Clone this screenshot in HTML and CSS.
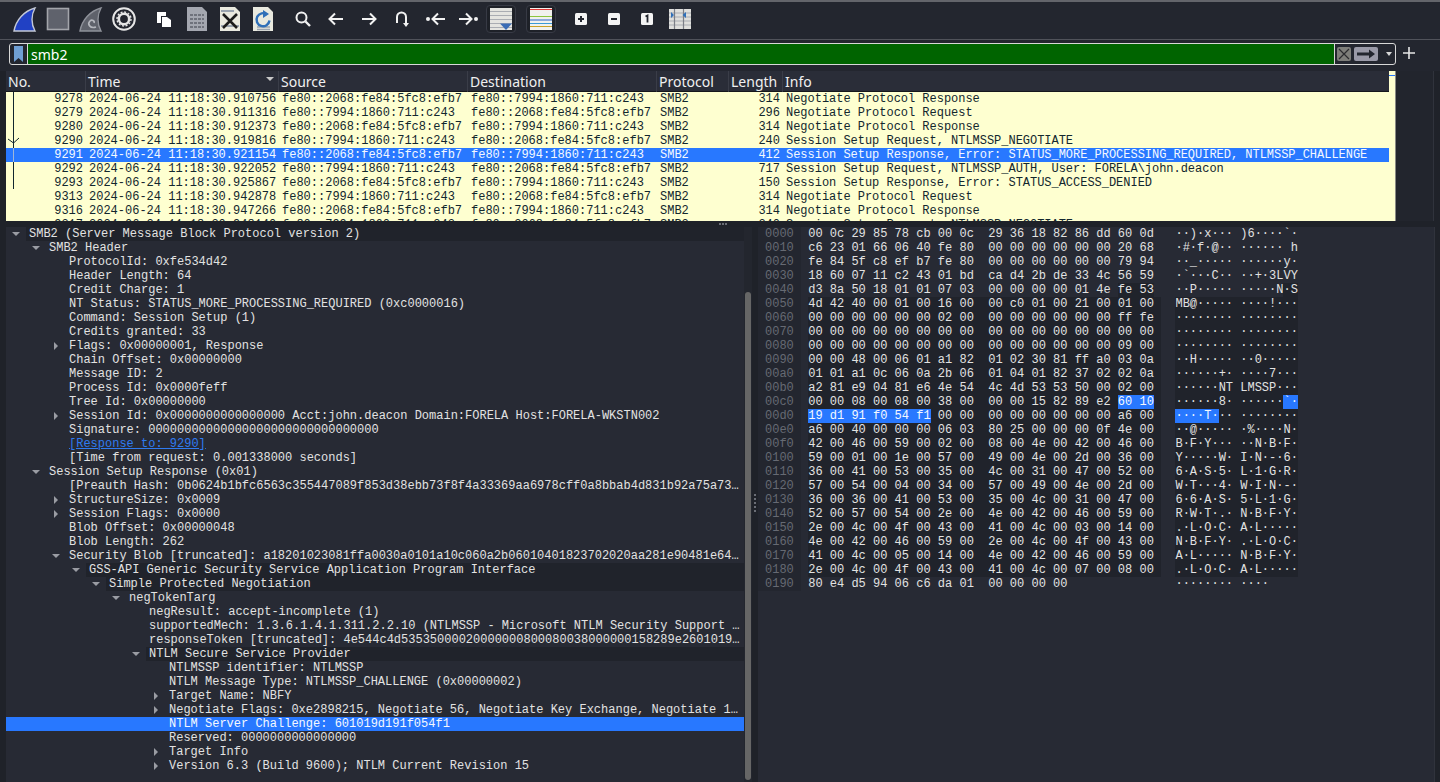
FILE: index.html
```html
<!DOCTYPE html>
<html lang="en">
<head>
    <meta charset="UTF-8">
    <meta name="viewport" content="width=device-width, initial-scale=1.0">
    <title>Wireshark</title>
    <link rel="stylesheet" href="styles.css">
</head>
<body>

    <!-- Main toolbar -->
    <div class="toolbar">
        <span class="tool"><svg width="28" height="28" viewBox="0 0 28 28"><path d="M3 26C5 15 13 6 24 3C20 10 20 19 24 26Z" fill="#2141c4" stroke="#c4c9d6" stroke-width="1.4"/></svg></span>
        <span class="tool"><svg width="28" height="28" viewBox="0 0 28 28"><rect x="3.5" y="3.5" width="21" height="21" fill="#5f626c" stroke="#a3a5ab" stroke-width="1.6"/></svg></span>
        <span class="tool"><svg width="28" height="28" viewBox="0 0 28 28"><path d="M3 26C5 15 13 6 24 3C20 10 20 19 24 26Z" fill="#5f626b" stroke="#8f929a" stroke-width="1.4"/><path d="M19 22C13 24 10 19 13 16C15 14 18 16 17 18" fill="none" stroke="#b5b7bd" stroke-width="1.6"/></svg></span>
        <span class="tool"><svg width="28" height="28" viewBox="0 0 28 28"><circle cx="14" cy="14" r="10.8" fill="none" stroke="#e6e6e6" stroke-width="2"/><circle cx="14" cy="14" r="5.2" fill="none" stroke="#e6e6e6" stroke-width="2.6"/><circle cx="14" cy="14" r="7" fill="none" stroke="#e6e6e6" stroke-width="1.4" stroke-dasharray="2 1.66"/></svg></span>
        <span class="sep"></span>
        <span class="tool"><svg width="28" height="28" viewBox="0 0 28 28"><path d="M7 7H16V11H11V18H7Z" fill="#fff"/><path d="M12 12H17L21 15V22H12Z" fill="#fff"/></svg></span>
        <span class="tool"><svg width="28" height="28" viewBox="0 0 28 28"><path d="M4 2H19L24 7V26H4Z" fill="#a4a7b0"/><path d="M7 10H21M7 14H21M7 18H21M7 22H21" stroke="#6f727c" stroke-width="2" stroke-dasharray="3 1"/></svg></span>
        <span class="tool"><svg width="28" height="28" viewBox="0 0 28 28"><path d="M4 2H19L24 7V26H4Z" fill="#e9e9df"/><path d="M5 6H18M5 21H23" stroke="#9aa4b0" stroke-width="2"/><path d="M7 9L21 23M21 9L7 23" stroke="#1b1b1b" stroke-width="2.6"/></svg></span>
        <span class="tool"><svg width="28" height="28" viewBox="0 0 28 28"><path d="M4 2H19L24 7V26H4Z" fill="#e9e9df"/><path d="M8 22H21M8 24.5H21" stroke="#9aa4b0" stroke-width="1.4"/><path d="M18 9.5A6.5 6.5 0 1 0 20.5 15.5" fill="none" stroke="#2f6fb8" stroke-width="2.4"/><path d="M14 5L20 9L14 13Z" fill="#2f6fb8"/></svg></span>
        <span class="sep"></span>
        <span class="tool"><svg width="28" height="28" viewBox="0 0 28 28"><circle cx="12.5" cy="12.5" r="5" fill="none" stroke="#f2f2f2" stroke-width="2"/><path d="M16.5 16.5L21 21" stroke="#f2f2f2" stroke-width="2.4"/></svg></span>
        <span class="tool"><svg width="28" height="28" viewBox="0 0 28 28"><path d="M21 14H8M13 8.5L7.5 14L13 19.5" fill="none" stroke="#f2f2f2" stroke-width="2"/></svg></span>
        <span class="tool"><svg width="28" height="28" viewBox="0 0 28 28"><path d="M7 14H20M15 8.5L20.5 14L15 19.5" fill="none" stroke="#f2f2f2" stroke-width="2"/></svg></span>
        <span class="tool"><svg width="28" height="28" viewBox="0 0 28 28"><path d="M9 18V12A4.5 4.5 0 0 1 18 12V20" fill="none" stroke="#f2f2f2" stroke-width="2"/><path d="M15 18L18 22L21 18Z" fill="#f2f2f2"/></svg></span>
        <span class="tool"><svg width="28" height="28" viewBox="0 0 28 28"><circle cx="7" cy="14" r="2" fill="#f2f2f2"/><path d="M24 14H12M17 8.5L11.5 14L17 19.5" fill="none" stroke="#f2f2f2" stroke-width="2"/></svg></span>
        <span class="tool"><svg width="28" height="28" viewBox="0 0 28 28"><circle cx="22" cy="14" r="2" fill="#f2f2f2"/><path d="M5 14H17M12 8.5L17.5 14L12 19.5" fill="none" stroke="#f2f2f2" stroke-width="2"/></svg></span>
        <span class="tool boxed"><svg width="22" height="22" viewBox="0 0 22 22"><rect width="22" height="22" fill="#e4e4e0"/><path d="M0 3.5H22M0 7.5H22M0 11.5H22M0 15.5H22M0 19.5H22" stroke="#a9acb2" stroke-width="1"/><path d="M10 15.5H22L16 22Z" fill="#3a6db5"/></svg></span>
        <span class="sep"></span>
        <span class="tool boxed"><svg width="22" height="22" viewBox="0 0 22 22"><rect width="22" height="22" fill="#f1f1ee"/><path d="M0 1.5H22" stroke="#d33" stroke-width="1"/><path d="M0 8.5H22" stroke="#8cc63f" stroke-width="1"/><path d="M0 12H22" stroke="#2a62c8" stroke-width="1"/><path d="M0 15.5H22" stroke="#3b9ad6" stroke-width="1"/><path d="M0 18.5H22" stroke="#c9a227" stroke-width="1"/></svg></span>
        <span class="sep"></span>
        <span class="tool"><svg width="28" height="28" viewBox="0 0 28 28"><rect x="8" y="8" width="12" height="12" rx="1.5" fill="#f4f4f4"/><path d="M11 14H17M14 11V17" stroke="#23262f" stroke-width="2"/></svg></span>
        <span class="tool"><svg width="28" height="28" viewBox="0 0 28 28"><rect x="8" y="8" width="12" height="12" rx="1.5" fill="#f4f4f4"/><path d="M11 14H17" stroke="#23262f" stroke-width="2"/></svg></span>
        <span class="tool"><svg width="28" height="28" viewBox="0 0 28 28"><rect x="8" y="8" width="12" height="12" rx="1.5" fill="#f4f4f4"/><path d="M12.5 11.5L14.5 10.5V17.5" fill="none" stroke="#23262f" stroke-width="1.8"/></svg></span>
        <span class="tool"><svg width="24" height="24" viewBox="0 0 24 24"><rect x="1" y="2" width="22" height="20" fill="#dfdfdc"/><path d="M1 6H23M1 10H23M1 14H23M1 18H23" stroke="#a9acb2"/><path d="M6.5 2V22M15.5 2V22" stroke="#7b7e86" stroke-width="1.2"/><path d="M3 5L6 8L3 11ZM18 5L14.5 8L18 11Z" fill="#2f6fb8"/></svg></span>
    </div>

    <!-- Display filter -->
    <div class="filter-row">
        <div class="filter">
            <span class="bookmark"><svg width="11" height="16" viewBox="0 0 11 16"><path d="M1 0H10V16L5.5 12L1 16Z" fill="#6f9fd4"/></svg></span>
            <span class="filter-input">smb2</span>
            <span class="filter-btns">
                <span class="clear-btn"><svg width="12" height="12" viewBox="0 0 12 12"><path d="M1 1L11 11M11 1L1 11" stroke="#2b2b2f" stroke-width="1.2"/></svg></span>
                <span class="apply-btn"><svg width="20" height="10" viewBox="0 0 20 10"><path d="M1 3.5H13V0.5L19 5L13 9.5V6.5H1Z" fill="#23262f"/></svg></span>
                <span class="drop"></span>
            </span>
        </div>
        <svg class="plus" width="14" height="14" viewBox="0 0 14 14"><path d="M7 1V13M1 7H13" stroke="#e6e6e6" stroke-width="1.6"/></svg>
    </div>

    <!-- Packet list -->
    <div class="list-row">
        <div class="packets">
            <div class="cols head">
                <span>No.</span>
                <span class="sorted">Time</span>
                <span>Source</span>
                <span>Destination</span>
                <span>Protocol</span>
                <span>Length</span>
                <span>Info</span>
            </div>
            <div class="rows">
                <svg class="conv" width="20" height="98" viewBox="0 0 20 98"><path d="M7.5 0V97" stroke="#12272e"/><path d="M2 47L7.5 51L13 46" fill="none" stroke="#12272e"/><path d="M7.5 56V70" stroke="#9fb6d8"/></svg>
                <div class="cols pkt"><span>9278</span><span>2024-06-24 11:18:30.910756</span><span>fe80::2068:fe84:5fc8:efb7</span><span>fe80::7994:1860:711:c243</span><span>SMB2</span><span>314</span><span>Negotiate Protocol Response</span></div>
                <div class="cols pkt"><span>9279</span><span>2024-06-24 11:18:30.911316</span><span>fe80::7994:1860:711:c243</span><span>fe80::2068:fe84:5fc8:efb7</span><span>SMB2</span><span>296</span><span>Negotiate Protocol Request</span></div>
                <div class="cols pkt"><span>9280</span><span>2024-06-24 11:18:30.912373</span><span>fe80::2068:fe84:5fc8:efb7</span><span>fe80::7994:1860:711:c243</span><span>SMB2</span><span>314</span><span>Negotiate Protocol Response</span></div>
                <div class="cols pkt"><span>9290</span><span>2024-06-24 11:18:30.919816</span><span>fe80::7994:1860:711:c243</span><span>fe80::2068:fe84:5fc8:efb7</span><span>SMB2</span><span>240</span><span>Session Setup Request, NTLMSSP_NEGOTIATE</span></div>
                <div class="cols pkt current"><span>9291</span><span>2024-06-24 11:18:30.921154</span><span>fe80::2068:fe84:5fc8:efb7</span><span>fe80::7994:1860:711:c243</span><span>SMB2</span><span>412</span><span>Session Setup Response, Error: STATUS_MORE_PROCESSING_REQUIRED, NTLMSSP_CHALLENGE</span></div>
                <div class="cols pkt"><span>9292</span><span>2024-06-24 11:18:30.922052</span><span>fe80::7994:1860:711:c243</span><span>fe80::2068:fe84:5fc8:efb7</span><span>SMB2</span><span>717</span><span>Session Setup Request, NTLMSSP_AUTH, User: FORELA\john.deacon</span></div>
                <div class="cols pkt"><span>9293</span><span>2024-06-24 11:18:30.925867</span><span>fe80::2068:fe84:5fc8:efb7</span><span>fe80::7994:1860:711:c243</span><span>SMB2</span><span>150</span><span>Session Setup Response, Error: STATUS_ACCESS_DENIED</span></div>
                <div class="cols pkt"><span>9313</span><span>2024-06-24 11:18:30.942878</span><span>fe80::7994:1860:711:c243</span><span>fe80::2068:fe84:5fc8:efb7</span><span>SMB2</span><span>314</span><span>Negotiate Protocol Request</span></div>
                <div class="cols pkt"><span>9316</span><span>2024-06-24 11:18:30.947266</span><span>fe80::2068:fe84:5fc8:efb7</span><span>fe80::7994:1860:711:c243</span><span>SMB2</span><span>314</span><span>Negotiate Protocol Response</span></div>
                <div class="cols pkt"><span>9317</span><span>2024-06-24 11:18:30.948140</span><span>fe80::7994:1860:711:c243</span><span>fe80::2068:fe84:5fc8:efb7</span><span>SMB2</span><span>240</span><span>Session Setup Request, NTLMSSP_NEGOTIATE</span></div>
            </div>
        </div>
        <div class="packet-map"><span class="map-mark"></span></div>
        <div class="list-side"></div>
    </div>

    <div class="h-split"><span class="grip-h"></span></div>

    <div class="bottom">
        <!-- Packet details -->
        <div class="details">
            <div class="tree">
                <div class="node l0"><i class="tw open"></i><span class="txt dark">SMB2 (Server Message Block Protocol version 2)</span></div>
                <div class="node l1"><i class="tw open"></i><span class="txt">SMB2 Header</span></div>
                <div class="node l2"><i class="tw"></i><span class="txt">ProtocolId: 0xfe534d42</span></div>
                <div class="node l2"><i class="tw"></i><span class="txt">Header Length: 64</span></div>
                <div class="node l2"><i class="tw"></i><span class="txt">Credit Charge: 1</span></div>
                <div class="node l2"><i class="tw"></i><span class="txt">NT Status: STATUS_MORE_PROCESSING_REQUIRED (0xc0000016)</span></div>
                <div class="node l2"><i class="tw"></i><span class="txt">Command: Session Setup (1)</span></div>
                <div class="node l2"><i class="tw"></i><span class="txt">Credits granted: 33</span></div>
                <div class="node l2"><i class="tw closed"></i><span class="txt">Flags: 0x00000001, Response</span></div>
                <div class="node l2"><i class="tw"></i><span class="txt">Chain Offset: 0x00000000</span></div>
                <div class="node l2"><i class="tw"></i><span class="txt">Message ID: 2</span></div>
                <div class="node l2"><i class="tw"></i><span class="txt">Process Id: 0x0000feff</span></div>
                <div class="node l2"><i class="tw"></i><span class="txt">Tree Id: 0x00000000</span></div>
                <div class="node l2"><i class="tw closed"></i><span class="txt">Session Id: 0x0000000000000000 Acct:john.deacon Domain:FORELA Host:FORELA-WKSTN002</span></div>
                <div class="node l2"><i class="tw"></i><span class="txt">Signature: 00000000000000000000000000000000</span></div>
                <div class="node l2"><i class="tw"></i><span class="txt"><a class="frame-link">[Response to: 9290]</a></span></div>
                <div class="node l2"><i class="tw"></i><span class="txt">[Time from request: 0.001338000 seconds]</span></div>
                <div class="node l1"><i class="tw open"></i><span class="txt">Session Setup Response (0x01)</span></div>
                <div class="node l2"><i class="tw"></i><span class="txt">[Preauth Hash: 0b0624b1bfc6563c355447089f853d38ebb73f8f4a33369aa6978cff0a8bbab4d831b92a75a73…</span></div>
                <div class="node l2"><i class="tw closed"></i><span class="txt">StructureSize: 0x0009</span></div>
                <div class="node l2"><i class="tw closed"></i><span class="txt">Session Flags: 0x0000</span></div>
                <div class="node l2"><i class="tw"></i><span class="txt">Blob Offset: 0x00000048</span></div>
                <div class="node l2"><i class="tw"></i><span class="txt">Blob Length: 262</span></div>
                <div class="node l2"><i class="tw open"></i><span class="txt">Security Blob [truncated]: a18201023081ffa0030a0101a10c060a2b06010401823702020aa281e90481e64…</span></div>
                <div class="node l3"><i class="tw open"></i><span class="txt dark">GSS-API Generic Security Service Application Program Interface</span></div>
                <div class="node l4"><i class="tw open"></i><span class="txt dark">Simple Protected Negotiation</span></div>
                <div class="node l5"><i class="tw open"></i><span class="txt">negTokenTarg</span></div>
                <div class="node l6"><i class="tw"></i><span class="txt">negResult: accept-incomplete (1)</span></div>
                <div class="node l6"><i class="tw"></i><span class="txt">supportedMech: 1.3.6.1.4.1.311.2.2.10 (NTLMSSP - Microsoft NTLM Security Support …</span></div>
                <div class="node l6"><i class="tw"></i><span class="txt">responseToken [truncated]: 4e544c4d53535000020000000800080038000000158289e2601019…</span></div>
                <div class="node l6"><i class="tw open"></i><span class="txt dark">NTLM Secure Service Provider</span></div>
                <div class="node l7"><i class="tw"></i><span class="txt">NTLMSSP identifier: NTLMSSP</span></div>
                <div class="node l7"><i class="tw"></i><span class="txt">NTLM Message Type: NTLMSSP_CHALLENGE (0x00000002)</span></div>
                <div class="node l7"><i class="tw closed"></i><span class="txt">Target Name: NBFY</span></div>
                <div class="node l7"><i class="tw closed"></i><span class="txt">Negotiate Flags: 0xe2898215, Negotiate 56, Negotiate Key Exchange, Negotiate 1…</span></div>
                <div class="node l7 picked"><i class="tw"></i><span class="txt">NTLM Server Challenge: 601019d191f054f1</span></div>
                <div class="node l7"><i class="tw"></i><span class="txt">Reserved: 0000000000000000</span></div>
                <div class="node l7"><i class="tw closed"></i><span class="txt">Target Info</span></div>
                <div class="node l7"><i class="tw closed"></i><span class="txt">Version 6.3 (Build 9600); NTLM Current Revision 15</span></div>
            </div>
            <div class="tree-scroll"><span class="thumb"></span></div>
        </div>

        <div class="v-split"><span class="grip-v"></span></div>

        <!-- Packet bytes -->
        <div class="bytes">
            <div class="hexrow"><span class="off">0000</span><span class="hex">00 0c 29 85 78 cb 00 0c  29 36 18 82 86 dd 60 0d</span><span class="asc">··)·x··· )6····`·</span></div>
            <div class="hexrow"><span class="off">0010</span><span class="hex">c6 23 01 66 06 40 fe 80  00 00 00 00 00 00 20 68</span><span class="asc">·#·f·@·· ······ h</span></div>
            <div class="hexrow"><span class="off">0020</span><span class="hex">fe 84 5f c8 ef b7 fe 80  00 00 00 00 00 00 79 94</span><span class="asc">··_····· ······y·</span></div>
            <div class="hexrow"><span class="off">0030</span><span class="hex">18 60 07 11 c2 43 01 bd  ca d4 2b de 33 4c 56 59</span><span class="asc">·`···C·· ··+·3LVY</span></div>
            <div class="hexrow"><span class="off">0040</span><span class="hex">d3 8a 50 18 01 01 07 03  00 00 00 00 01 4e <b class="field">fe 53</b></span><span class="asc">··P····· ·····N<b class="field">·S</b></span></div>
            <div class="hexrow"><span class="off">0050</span><span class="hex field">4d 42 40 00 01 00 16 00  00 c0 01 00 21 00 01 00</span><span class="asc field">MB@····· ····!···</span></div>
            <div class="hexrow"><span class="off">0060</span><span class="hex field">00 00 00 00 00 00 02 00  00 00 00 00 00 00 ff fe</span><span class="asc field">········ ········</span></div>
            <div class="hexrow"><span class="off">0070</span><span class="hex field">00 00 00 00 00 00 00 00  00 00 00 00 00 00 00 00</span><span class="asc field">········ ········</span></div>
            <div class="hexrow"><span class="off">0080</span><span class="hex field">00 00 00 00 00 00 00 00  00 00 00 00 00 00 09 00</span><span class="asc field">········ ········</span></div>
            <div class="hexrow"><span class="off">0090</span><span class="hex field">00 00 48 00 06 01 a1 82  01 02 30 81 ff a0 03 0a</span><span class="asc field">··H····· ··0·····</span></div>
            <div class="hexrow"><span class="off">00a0</span><span class="hex field">01 01 a1 0c 06 0a 2b 06  01 04 01 82 37 02 02 0a</span><span class="asc field">······+· ····7···</span></div>
            <div class="hexrow"><span class="off">00b0</span><span class="hex field">a2 81 e9 04 81 e6 4e 54  4c 4d 53 53 50 00 02 00</span><span class="asc field">······NT LMSSP···</span></div>
            <div class="hexrow"><span class="off">00c0</span><span class="hex field">00 00 08 00 08 00 38 00  00 00 15 82 89 e2 <b class="hit">60 10</b></span><span class="asc field">······8· ······<b class="hit">`·</b></span></div>
            <div class="hexrow"><span class="off">00d0</span><span class="hex field"><b class="hit">19 d1 91 f0 54 f1</b> 00 00  00 00 00 00 00 00 a6 00</span><span class="asc field"><b class="hit">····T·</b>·· ········</span></div>
            <div class="hexrow"><span class="off">00e0</span><span class="hex field">a6 00 40 00 00 00 06 03  80 25 00 00 00 0f 4e 00</span><span class="asc field">··@····· ·%····N·</span></div>
            <div class="hexrow"><span class="off">00f0</span><span class="hex field">42 00 46 00 59 00 02 00  08 00 4e 00 42 00 46 00</span><span class="asc field">B·F·Y··· ··N·B·F·</span></div>
            <div class="hexrow"><span class="off">0100</span><span class="hex field">59 00 01 00 1e 00 57 00  49 00 4e 00 2d 00 36 00</span><span class="asc field">Y·····W· I·N·-·6·</span></div>
            <div class="hexrow"><span class="off">0110</span><span class="hex field">36 00 41 00 53 00 35 00  4c 00 31 00 47 00 52 00</span><span class="asc field">6·A·S·5· L·1·G·R·</span></div>
            <div class="hexrow"><span class="off">0120</span><span class="hex field">57 00 54 00 04 00 34 00  57 00 49 00 4e 00 2d 00</span><span class="asc field">W·T···4· W·I·N·-·</span></div>
            <div class="hexrow"><span class="off">0130</span><span class="hex field">36 00 36 00 41 00 53 00  35 00 4c 00 31 00 47 00</span><span class="asc field">6·6·A·S· 5·L·1·G·</span></div>
            <div class="hexrow"><span class="off">0140</span><span class="hex field">52 00 57 00 54 00 2e 00  4e 00 42 00 46 00 59 00</span><span class="asc field">R·W·T·.· N·B·F·Y·</span></div>
            <div class="hexrow"><span class="off">0150</span><span class="hex field">2e 00 4c 00 4f 00 43 00  41 00 4c 00 03 00 14 00</span><span class="asc field">.·L·O·C· A·L·····</span></div>
            <div class="hexrow"><span class="off">0160</span><span class="hex field">4e 00 42 00 46 00 59 00  2e 00 4c 00 4f 00 43 00</span><span class="asc field">N·B·F·Y· .·L·O·C·</span></div>
            <div class="hexrow"><span class="off">0170</span><span class="hex field">41 00 4c 00 05 00 14 00  4e 00 42 00 46 00 59 00</span><span class="asc field">A·L····· N·B·F·Y·</span></div>
            <div class="hexrow"><span class="off">0180</span><span class="hex field">2e 00 4c 00 4f 00 43 00  41 00 4c 00 07 00 08 00</span><span class="asc field">.·L·O·C· A·L·····</span></div>
            <div class="hexrow"><span class="off">0190</span><span class="hex">80 e4 d5 94 06 c6 da 01  00 00 00 00</span><span class="asc">········ ····</span></div>
        </div>
    </div>

</body>
</html>
```

FILE: styles.css
```css
/* Base Reset */
* {
    margin: 0;
    padding: 0;
    box-sizing: border-box;
}

body {
    width: 1440px;
    height: 782px;
    overflow: hidden;
    display: flex;
    flex-direction: column;
    background-color: #1f2229;
    color: #e4e4e4;
    font-family: 'Liberation Mono', monospace;
    font-size: 12px;
}

/* Toolbar */
.toolbar {
    height: 40px;
    flex: none;
    display: flex;
    align-items: center;
    padding: 0 0 3px 8px;
    background-color: #23262f;
    border-top: 2px solid #63656b;
    border-bottom: 1px solid #50525a;
}

.tool {
    width: 33px;
    height: 33px;
    display: flex;
    align-items: center;
    justify-content: center;
    flex: none;
}

.tool.boxed {
    width: 30px;
    height: 28px;
    margin: 0 1.5px;
    border: 1px solid #373a45;
    border-radius: 4px;
    background-color: #1e2128;
}

.sep {
    width: 7px;
    flex: none;
}

/* Filter bar */
.filter-row {
    height: 31px;
    flex: none;
    display: flex;
    align-items: flex-start;
    padding: 3px 0 0 9px;
    background-color: #23262f;
}

.filter {
    width: 1387px;
    height: 22px;
    display: flex;
    border: 1px solid #d8d8d8;
    border-radius: 3px;
    background-color: #23262f;
}

.bookmark {
    width: 17px;
    flex: none;
    display: flex;
    align-items: center;
    justify-content: center;
}

.filter-input {
    width: 1308px;
    flex: none;
    padding-left: 3px;
    background-color: #006400;
    color: #fff;
    font-family: 'Noto Sans', sans-serif;
    font-size: 14px;
    line-height: 21px;
    border-left: 1px solid #d8d8d8;
    border-right: 1px solid #d8d8d8;
}

.filter-btns {
    flex: 1;
    display: flex;
    align-items: center;
    padding-left: 2px;
}

.clear-btn {
    width: 14px;
    height: 14px;
    display: flex;
    align-items: center;
    justify-content: center;
    background-color: #7e7e7a;
    border-radius: 2px;
}

.apply-btn {
    width: 24px;
    height: 14px;
    margin-left: 3px;
    display: flex;
    align-items: center;
    justify-content: center;
    background-color: #9a9aa8;
    border-radius: 2px;
}

.drop {
    margin-left: 8px;
    border-left: 3px solid transparent;
    border-right: 3px solid transparent;
    border-top: 4px solid #d8d8d8;
}

.plus {
    margin: 3px 0 0 6px;
}

/* Packet list */
.list-row {
    height: 150px;
    flex: none;
    display: flex;
    padding-left: 6px;
}

.packets {
    width: 1383px;
    flex: none;
    display: flex;
    flex-direction: column;
}

.cols {
    display: grid;
    grid-template-columns: 79px 193px 189px 189px 72px 54px 1fr;
}

.head {
    height: 21px;
    flex: none;
    background-color: #2a2d38;
    color: #f0f0f0;
    font-family: 'Noto Sans', sans-serif;
    font-size: 14px;
    line-height: 21px;
    border-bottom: 1px solid #15171c;
}

.head span {
    position: relative;
    padding-left: 2px;
    white-space: nowrap;
    border-left: 1px solid #3a3d48;
}

.head span:first-child {
    border-left: none;
}

.sorted::after {
    content: "";
    position: absolute;
    right: 4px;
    top: 6px;
    border-left: 4px solid transparent;
    border-right: 4px solid transparent;
    border-top: 4px solid #c8c8c8;
}

.rows {
    position: relative;
    flex: 1;
    overflow: hidden;
    background-color: #feffd0;
}

.conv {
    position: absolute;
    left: 0;
    top: 0;
    z-index: 1;
}

.pkt {
    height: 14px;
    line-height: 14px;
    color: #12272e;
    white-space: pre;
}

.pkt span {
    padding-left: 4px;
    overflow: hidden;
}

.pkt span:nth-child(1),
.pkt span:nth-child(6) {
    text-align: right;
    padding-right: 2px;
}

.pkt span:last-child {
    letter-spacing: -0.025px;
}

.pkt.current {
    background-color: #2878ff;
    color: #f4f8ff;
}

.packet-map {
    position: relative;
    width: 7px;
    flex: none;
    background-color: #feffd0;
    border-right: 1px solid #8a8a84;
}

.map-mark {
    position: absolute;
    left: 0;
    right: 0;
    top: 4px;
    height: 1px;
    background-color: #2878ff;
}

.list-side {
    width: 38px;
    flex: none;
    background-color: #22252d;
    border-right: 1px solid #30333c;
}

/* Splitters */
.h-split {
    height: 6px;
    flex: none;
    display: flex;
    justify-content: center;
    align-items: center;
}

.grip-h {
    width: 8px;
    margin-left: 6px;
    border-top: 2px dotted #6a6d75;
}

.v-split {
    width: 6px;
    flex: none;
    display: flex;
    align-items: center;
    justify-content: center;
}

.grip-v {
    height: 18px;
    margin-top: -3px;
    border-left: 2px dotted #6a6d75;
}

/* Details pane */
.bottom {
    flex: 1;
    min-height: 0;
    display: flex;
    padding-left: 6px;
}

.details {
    width: 746px;
    flex: none;
    display: flex;
    background-color: #272a34;
}

.tree {
    width: 738px;
    flex: none;
}

.node {
    height: 14px;
    display: flex;
    line-height: 14px;
    white-space: pre;
    color: #e2e2e2;
}

.l0 { padding-left: 3px; }
.l1 { padding-left: 23px; }
.l2 { padding-left: 43px; }
.l3 { padding-left: 63px; }
.l4 { padding-left: 83px; }
.l5 { padding-left: 103px; }
.l6 { padding-left: 123px; }
.l7 { padding-left: 143px; }

.tw {
    position: relative;
    width: 20px;
    flex: none;
}

.tw.open::after {
    content: "";
    position: absolute;
    left: 3px;
    top: 5px;
    border-left: 4px solid transparent;
    border-right: 4px solid transparent;
    border-top: 4px solid #9a9ca3;
}

.tw.closed::after {
    content: "";
    position: absolute;
    left: 5px;
    top: 3px;
    border-top: 4px solid transparent;
    border-bottom: 4px solid transparent;
    border-left: 4px solid #9a9ca3;
}

.txt {
    flex: 1;
    margin-left: -3px;
    padding-left: 3px;
}

.txt.dark {
    background-color: #20232b;
}

.frame-link {
    color: #2f7bf0;
    text-decoration: underline;
}

.node.picked {
    background-color: #2878ff;
    color: #f4f8ff;
}

.tree-scroll {
    position: relative;
    flex: 1;
    background-color: #23262e;
}

.thumb {
    position: absolute;
    left: 1px;
    right: 1px;
    top: 65px;
    bottom: 2px;
    background-color: #666666;
    border-radius: 3px;
}

/* Bytes pane */
.bytes {
    flex: 1;
    margin-right: 5px;
    background-color: #272a34;
    border-right: 1px solid #30333c;
}

.hexrow {
    height: 14px;
    display: flex;
    line-height: 14px;
    white-space: pre;
    color: #e2e2e2;
}

.off {
    width: calc(6ch + 7px);
    flex: none;
    padding-left: 7px;
    color: #666a73;
    background: linear-gradient(to right, #23262f 43px, #272a34 43px);
}

.hex {
    width: 49ch;
    flex: none;
}

.asc {
    width: 17ch;
    flex: none;
    margin-left: 2ch;
}

.field {
    background-color: #20232b;
    font-weight: normal;
}

.hit {
    display: inline-block;
    background-color: #2878ff;
    color: #f4f8ff;
    font-weight: normal;
}
```
